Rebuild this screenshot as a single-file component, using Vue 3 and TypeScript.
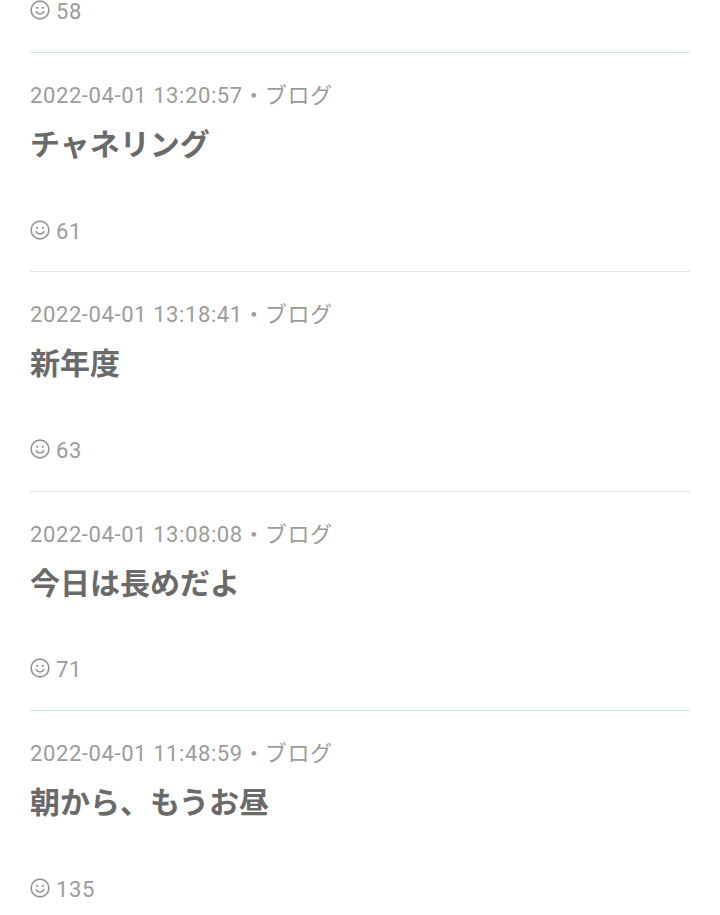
<script setup lang="ts">
// 投稿リスト
interface Post {
  date: string
  category: string
  title: string
  count: number
  tint: boolean
}

const posts: Post[] = [
  { date: '2022-04-01 13:20:57', category: 'ブログ', title: 'チャネリング', count: 61, tint: false },
  { date: '2022-04-01 13:18:41', category: 'ブログ', title: '新年度', count: 63, tint: false },
  { date: '2022-04-01 13:08:08', category: 'ブログ', title: '今日は長めだよ', count: 71, tint: true },
  { date: '2022-04-01 11:48:59', category: 'ブログ', title: '朝から、もうお昼', count: 135, tint: false }
]
</script>

<template>
  <div class="list">
    <!-- 画面上部で切れている前の投稿 -->
    <div class="post post-cut tinted">
      <div class="stat">
        <svg class="smile" viewBox="0 0 20 20" aria-hidden="true">
          <circle cx="10" cy="10" r="8.9" />
          <path d="M6.2 11.6c.8 1.6 2.2 2.4 3.8 2.4s3-.8 3.8-2.4" />
          <circle class="eye" cx="7.1" cy="7.8" r="1.1" />
          <circle class="eye" cx="12.9" cy="7.8" r="1.1" />
        </svg>
        <span>58</span>
      </div>
    </div>

    <div v-for="post in posts" :key="post.date" class="post" :class="{ tinted: post.tint }">
      <div class="meta">{{ post.date }}<span class="dot">・</span>{{ post.category }}</div>
      <h2 class="title">{{ post.title }}</h2>
      <div class="stat">
        <svg class="smile" viewBox="0 0 20 20" aria-hidden="true">
          <circle cx="10" cy="10" r="8.9" />
          <path d="M6.2 11.6c.8 1.6 2.2 2.4 3.8 2.4s3-.8 3.8-2.4" />
          <circle class="eye" cx="7.1" cy="7.8" r="1.1" />
          <circle class="eye" cx="12.9" cy="7.8" r="1.1" />
        </svg>
        <span>{{ post.count }}</span>
      </div>
    </div>
  </div>
</template>

<style scoped>
.list {
  padding: 0 30px;
  font-family: Roboto, "Noto Sans CJK JP", sans-serif;
}

.post {
  box-sizing: border-box;
  height: 219.4px;
  padding-top: 28px;
  border-bottom: 1px solid #e3e3e3;
}

.tinted {
  border-bottom-color: #c8e4f2;
}

/* flow-root: 先頭の負マージンがリスト全体に伝わらないように */
.post-cut {
  display: flow-root;
  height: 53px;
  padding-top: 0;
}

.meta {
  height: 30px;
  line-height: 30px;
  font-size: 22px;
  letter-spacing: 0.6px;
  color: #9c9c9c;
  white-space: nowrap;
}

.dot {
  display: inline-block;
  width: 22px;
  text-align: center;
  letter-spacing: 0;
}

.title {
  margin: 13px 0 0;
  height: 42px;
  line-height: 42px;
  font-size: 30px;
  font-weight: 700;
  color: #6a6a6a;
}

.stat {
  display: flex;
  align-items: center;
  gap: 6px;
  height: 30px;
  margin-top: 50px;
  font-size: 22px;
  letter-spacing: 0.6px;
  color: #9c9c9c;
}

.post-cut .stat {
  margin-top: -4px;
}

.smile {
  width: 20px;
  height: 20px;
  margin-top: -3px;
  fill: none;
  stroke: #939393;
  stroke-width: 1.6;
  stroke-linecap: round;
}

.smile .eye {
  fill: #939393;
  stroke: none;
}
</style>

<style>
html,
body {
  margin: 0;
  background: #fff;
  overflow: hidden;
}
</style>
